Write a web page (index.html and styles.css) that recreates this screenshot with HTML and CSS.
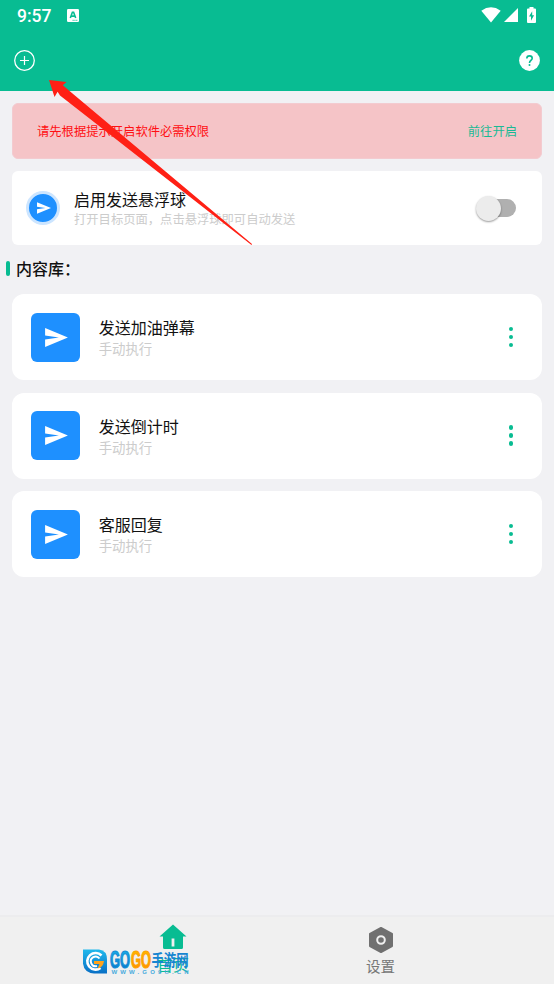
FILE: index.html
```html
<!DOCTYPE html>
<html lang="zh-CN">
<head>
<meta charset="utf-8">
<title>内容库</title>
<link rel="stylesheet" href="styles.css">
</head>
<body>
<svg class="defs" aria-hidden="true">
  <symbol id="send" viewBox="0 0 24 20"><path d="M0 0 24 10 0 20V12.2L14.5 10 0 7.8Z" fill="#fff"/></symbol>
</svg>
<div class="screen">
  <header class="header">
    <div class="status">
      <span class="time">9:57</span>
      <svg class="keyboard" width="12" height="13" viewBox="0 0 12 13"><rect width="12" height="13" rx="1.2" fill="#fff"/><path d="M3.3 9 5.4 3.2H6.6L8.7 9M4.2 7.1H7.8" fill="none" stroke="#08bc92" stroke-width="1.6"/><path d="M5.5 11.3H10.5" stroke="#08bc92" stroke-width=".8" stroke-dasharray="1.3 .5"/></svg>
      <div class="signals">
        <svg width="20" height="16" viewBox="0 0 20 16"><path d="M.3 3.7Q10-3 19.7 3.7L10 15.5Z" fill="#fff"/></svg>
        <svg width="14" height="14" viewBox="0 0 14 14"><path d="M14 0V14H0Z" fill="#fff"/></svg>
        <svg class="battery" width="9" height="16" viewBox="0 0 9 16"><path d="M2.5 0H6.5V1.5H8Q9 1.5 9 2.5V15Q9 16 8 16H1Q0 16 0 15V2.5Q0 1.5 1 1.5H2.5Z" fill="#fff"/><path d="M5.2 4.2 2 9.4H4V13.8L7.1 8.2H5.2Z" fill="#08bc92"/></svg>
      </div>
    </div>
    <div class="toolbar">
      <svg width="22" height="22" viewBox="0 0 22 22" fill="none" stroke="#fff"><circle cx="10.5" cy="11.5" r="9.8" stroke-width="1.3"/><path d="M10.5 7V16M6 11.5H15" stroke-width="1.2"/></svg>
      <svg width="22" height="22" viewBox="-.5 -.5 22 22"><circle cx="11" cy="11" r="10.4" fill="#fff"/><path d="M8.3 9Q8.3 6.4 11 6.4 13.7 6.4 13.7 8.8 13.7 10 12.3 11 11 12 11 13.5" fill="none" stroke="#08bc92" stroke-width="1.6"/><circle cx="11" cy="15.6" r="1" fill="#08bc92"/></svg>
    </div>
  </header>
  <main class="main">
    <section class="notice"><span>请先根据提示开启软件必需权限</span><span class="open">前往开启</span></section>
    <section class="float-card">
      <div class="ball"><svg width="14" height="12"><use href="#send"/></svg></div>
      <div class="copy">
        <div class="title">启用发送悬浮球</div>
        <div class="hint">打开目标页面，点击悬浮球即可自动发送</div>
      </div>
      <div class="switch"><span class="thumb"></span></div>
    </section>
    <h2 class="heading">内容库：</h2>
    <div class="list">
      <article class="item">
        <div class="tile"><svg width="23" height="19"><use href="#send"/></svg></div>
        <div class="copy"><div class="title">发送加油弹幕</div><div class="sub">手动执行</div></div>
        <div class="more"><i></i><i></i><i></i></div>
      </article>
      <article class="item">
        <div class="tile"><svg width="23" height="19"><use href="#send"/></svg></div>
        <div class="copy"><div class="title">发送倒计时</div><div class="sub">手动执行</div></div>
        <div class="more"><i></i><i></i><i></i></div>
      </article>
      <article class="item">
        <div class="tile"><svg width="23" height="19"><use href="#send"/></svg></div>
        <div class="copy"><div class="title">客服回复</div><div class="sub">手动执行</div></div>
        <div class="more"><i></i><i></i><i></i></div>
      </article>
    </div>
  </main>
  <nav class="tabs">
    <div class="tab active">
      <svg width="28" height="26" viewBox="0 0 28 26"><path d="M14 .5 27.5 12.5H24V23.5Q24 25 22.5 25H5.5Q4 25 4 23.5V12.5H.5Z" fill="#08bc92"/><rect x="12.6" y="14.5" width="2.8" height="8" fill="#f0f0f0"/></svg>
      <span>首页</span>
    </div>
    <div class="tab">
      <svg width="26" height="28" viewBox="0 0 26 28"><path d="M13 2 24 8V20L13 26 2 20V8Z" fill="#707070" stroke="#707070" stroke-width="2" stroke-linejoin="round"/><circle cx="13" cy="14" r="3.8" fill="none" stroke="#f0f0f0" stroke-width="2"/></svg>
      <span>设置</span>
    </div>
  </nav>
  <svg class="arrow" width="204" height="166" viewBox="0 0 204 166"><path d="M0 0 17.5 2 13.8 5.2 25 14.8 203 164 202.5 165 11 15.5 8.6 11.8 5.5 17Z" fill="#ff2015"/></svg>
  <svg class="watermark" width="110" height="30" viewBox="0 0 110 30">
    <defs>
      <linearGradient id="blue" x2="0" y2="1"><stop stop-color="#20b9ec"/><stop offset="1" stop-color="#086fc5"/></linearGradient>
      <linearGradient id="gold" x2="0" y2="1"><stop stop-color="#ffc000"/><stop offset="1" stop-color="#ff8a00"/></linearGradient>
    </defs>
    <path d="M1 1.5H17Q25 2.5 25 11.5V25.5H12Q2 24.5 1 15.5Z" fill="url(#blue)"/>
    <path d="M19.5 7.5A8.3 8.3 0 1 0 18.5 20" fill="none" stroke="#fff" stroke-width="2.6"/>
    <path d="M17.5 10.5A4.8 4.8 0 1 0 15 18" fill="none" stroke="#fff" stroke-width="2"/>
    <path d="M12 13H22Q21 20 15.5 20.5L17.5 16H12Z" fill="#ffa31c"/>
    <text class="logo" x="28" y="19.5" textLength="20" lengthAdjust="spacingAndGlyphs" fill="url(#blue)" stroke="#118cd6">GO</text>
    <text class="logo" x="49" y="19.5" textLength="20" lengthAdjust="spacingAndGlyphs" fill="url(#gold)" stroke="#ffa000">GO</text>
    <text class="logo-cn" x="69.5" y="17.5" textLength="37" lengthAdjust="spacingAndGlyphs">手游网</text>
    <text class="site" x="29.5" y="25.5" textLength="77">WWW.GO9U.CN</text>
  </svg>
</div>
</body>
</html>
```
FILE: styles.css
```css
* { box-sizing: border-box; }
body { margin: 0; font-family: "Noto Sans CJK SC", sans-serif; background: #f1f1f4; }
svg { display: block; flex: none; }
.defs { position: absolute; width: 0; height: 0; }
.screen { position: relative; width: 554px; height: 984px; display: flex; flex-direction: column; overflow: hidden; }
.header { height: 91px; background: #08bc92; flex: none; }
.status { height: 30px; padding: 0 18px 0 17px; display: flex; align-items: center; color: #fff; }
.time { font: 500 17.5px/30px Roboto, sans-serif; width: 50px; padding-top: 1px; }
.signals { margin-left: auto; display: flex; align-items: center; gap: 3px; }
.battery { margin: -1px 0 0 6px; }
.toolbar { height: 60px; padding: 0 14px; display: flex; align-items: center; justify-content: space-between; }
.main { flex: 1; padding: 12px 12px 0; }
.notice { height: 56px; border: 1px solid #f3cbd0; border-radius: 6px; background: #f5c4c7; padding: 0 24px; display: flex; align-items: center; justify-content: space-between; color: #ff1013; font-size: 12.3px; line-height: 18px; }
.open { color: #18ba95; }
.float-card { height: 74px; margin-top: 12px; border-radius: 6px; background: #fff; padding: 0 26px 0 14px; display: flex; align-items: center; }
.ball { width: 34px; height: 34px; border: 3px solid #cce5ff; border-radius: 50%; background: #1e90ff; display: flex; align-items: center; justify-content: center; padding-left: 2px; }
.float-card .copy { margin-left: 14px; }
.title { font-size: 16px; line-height: 22px; color: #111; }
.hint { font-size: 12.3px; line-height: 18px; color: #ccc; }
.float-card .title { margin-top: -1px; line-height: 22px; }
.switch { margin-left: auto; width: 34px; height: 18px; border-radius: 9px; background: #b0b0b0; display: flex; align-items: center; }
.thumb { width: 25px; height: 25px; flex: none; margin-left: -6.5px; border-radius: 50%; background: #ececec; box-shadow: 0 1px 2px #0006; }
.heading { margin: 11px 0 0 -6px; height: 25px; font-size: 16px; line-height: 25px; font-weight: 500; color: #111; display: flex; align-items: center; }
.heading::before { content: ""; width: 4px; height: 15px; border-radius: 2px; background: #08bc92; margin-right: 6px; }
.list { margin-top: 13px; display: flex; flex-direction: column; gap: 12.5px; }
.item { height: 86px; border-radius: 12px; background: #fff; padding: 0 29px 0 19px; display: flex; align-items: center; }
.tile { width: 49px; height: 49px; border-radius: 6px; background: #1e90ff; display: flex; align-items: center; justify-content: center; padding-left: 2px; }
.item .copy { margin-left: 18.7px; }
.sub { font-size: 13.4px; line-height: 20px; color: #ccc; }
.more { margin-left: auto; display: flex; flex-direction: column; gap: 3.7px; }
.more i { width: 4.4px; height: 4.4px; border-radius: 50%; background: #08bc92; }
.tabs { height: 69px; flex: none; background: #f0f0f0; border-top: 2px solid #ececee; padding: 9px 70px; display: grid; grid-template-columns: 1fr 1fr; }
.tab { display: flex; flex-direction: column; align-items: center; font-size: 14.5px; line-height: 24px; color: #777; }
.tab svg { height: 28px; }
.tab.active { color: #08bc92; font-size: 16px; line-height: 26px; margin-left: -1px; }
.tab.active svg { margin: -3px 0 0; }
.arrow { position: absolute; left: 49px; top: 80px; }
.watermark { position: absolute; left: 82px; top: 948px; overflow: visible; }
.logo { font: 700 23px "Liberation Sans", sans-serif; stroke-width: 1.2px; }
.logo-cn { font: 700 16px "Noto Sans CJK SC", sans-serif; fill: #1685d1; }
.site { font: 700 6px "Liberation Sans", sans-serif; fill: #45aadd; }
```
